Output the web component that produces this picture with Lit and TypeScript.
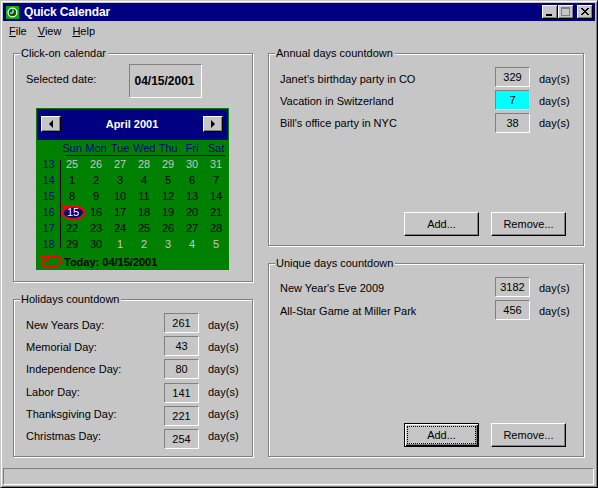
import { LitElement, html, css, svg } from "lit";
import { customElement } from "lit/decorators.js";

const holidays = [
  ["New Years Day:", "261", 0, 2], ["Memorial Day:", "43", 3, 1], ["Independence Day:", "80", 3, 0],
  ["Labor Day:", "141", 4, -1], ["Thanksgiving Day:", "221", 3, -2], ["Christmas Day:", "254", 3, -3],
] as const;
const annual = [
  ["Janet's birthday party in CO", "329", 0, 2, false], ["Vacation in Switzerland", "7", 3, 1, true], ["Bill's office party in NYC", "38", 3, 0, false],
] as const;
const unique = [
  ["New Year's Eve 2009", "3182", 0, 1], ["All-Star Game at Miller Park", "456", 3, 1],
] as const;
const names = ["Sun", "Mon", "Tue", "Wed", "Thu", "Fri", "Sat"];
const weeks: [number, (string)[]][] = [
  [13, ["25", "26", "27", "28", "29", "30", "31"]],
  [14, ["1", "2", "3", "4", "5", "6", "7"]],
  [15, ["8", "9", "10", "11", "12", "13", "14"]],
  [16, ["15", "16", "17", "18", "19", "20", "21"]],
  [17, ["22", "23", "24", "25", "26", "27", "28"]],
  [18, ["29", "30", "1", "2", "3", "4", "5"]],
];

@customElement("app-root")
export class AppRoot extends LitElement {
  static styles = css`
    :host { display: block; width: 598px; height: 488px; font: 11px/13px "Liberation Sans", Arial, sans-serif; color: #000; }
    * { box-sizing: border-box; }
    .window { width: 598px; height: 488px; background: #c6c6c6; display: flex; flex-direction: column;
      border-top: 1px solid #c6c6c6; border-left: 1px solid #c6c6c6; border-right: 1px solid #000; border-bottom: 1px solid #000;
      box-shadow: inset 1px 1px 0 #fff, inset -1px -1px 0 #808080; padding: 2px; }
    .title { height: 18px; flex: none; background: #000080; color: #fff; font-weight: bold; font-size: 12px; display: flex; align-items: center; padding: 0 2px 0 2px; }
    .title .ico { width: 15px; height: 15px; margin-right: 4px; display: block; }
    .title .name { flex: 1; letter-spacing: -0.15px; }
    .wbtn { width: 16px; height: 14px; background: #c6c6c6; display: block; }
    .wbtn.close { margin-left: 3px; }
    .menu { height: 20px; flex: none; display: flex; align-items: center; padding-left: 6px; }
    .menu span { margin-right: 11px; }
    .menu u { text-decoration: underline; }
    .main { flex: 1; min-height: 0; display: grid; grid-template-columns: 240px 316px; column-gap: 15px; padding: 12px 0 0 10px; }
    .col { display: flex; flex-direction: column; height: 405px; }
    .group { position: relative; border: 1px solid #808080; box-shadow: 1px 1px 0 #fff, inset 1px 1px 0 #fff; display: flex; flex-direction: column; }
    .legend { position: absolute; left: 6px; top: -7px; background: #c6c6c6; padding: 0 2px 0 1px; }
    .cal-group { height: 229px; margin-bottom: 17px; padding: 10px 0 0 12px; }
    .hol-group { height: 158px; padding: 13px 0 0 12px; }
    .ann-group { height: 193px; margin-bottom: 17px; padding: 13px 0 0 11px; }
    .uni-group { height: 194px; padding: 13px 0 0 11px; }
    .sel { display: flex; align-items: flex-start; }
    .sel .lab { width: 103px; margin-top: 9px; }
    .sel .val { width: 73px; height: 34px; border: 1px solid; border-color: #808080 #fff #fff #808080; font-weight: bold; font-size: 12px; display: flex; align-items: center; justify-content: center; padding-right: 2px; }
    .cal { position: relative; width: 193px; height: 162px; margin: 10px 0 0 10px; background: #008000; padding: 1px; flex: none; }
    .cal-head { height: 31px; background: #000080; display: flex; align-items: center; justify-content: space-between; padding: 0 5px 1px 4px; color: #fff; font-weight: bold; }
    .nav { width: 20px; height: 16px; background: #c6c6c6; border: 1px solid; border-color: #fff #000 #000 #fff; box-shadow: inset -1px -1px 0 #808080; display: flex; align-items: center; justify-content: center; }
    .nav svg { display: block; }
    .names { height: 15px; display: grid; grid-template-columns: 24px repeat(7, 24px); color: #000080; align-items: center; text-align: center; padding-top: 1px; }
    .names span { padding-right: 2px; }
    .rule { height: 1px; background: #000; margin: 0 3px 0 28px; }
    .body { display: grid; grid-template-columns: 23px 1px repeat(7, 24px); grid-auto-rows: 16px; align-items: center; text-align: center; }
    .body .wk { color: #000080; }
    .body .vl { grid-column: 2; grid-row: 1 / span 6; width: 1px; height: 88px; background: #000; align-self: center; }
    .body .d { padding-right: 2px; }
    .body .d.off { color: #c6c6c6; }
    .body .d.sel15 { color: #fff; background: #000080; border-radius: 50%; width: 20px; height: 12px; line-height: 12px; margin-left: 2px; padding: 0; }
    .today { font-weight: bold; padding: 3px 0 0 27px; height: 18px; display: flex; align-items: center; }
    .ovals { position: absolute; left: 0; top: 0; width: 193px; height: 162px; pointer-events: none; }
    .row { display: flex; align-items: flex-start; height: 20px; flex: none; }
    .row .label { line-height: 20px; white-space: nowrap; }
    .hol-group .label { width: 138px; }
    .ann-group .label, .uni-group .label { width: 215px; }
    .num { width: 35px; height: 20px; flex: none; border: 1px solid; border-color: #808080 #fff #fff #808080; display: flex; align-items: center; justify-content: center; }
    .num.cyan { background: #00ffff; }
    .unit { margin-left: 9px; line-height: 20px; }
    .btns { margin-top: auto; display: flex; justify-content: flex-end; gap: 12px; padding: 0 17px 9px 0; }
    .btn { width: 75px; height: 24px; background: #c6c6c6; border: 1px solid; border-color: #fff #000 #000 #fff; box-shadow: inset -1px -1px 0 #808080; display: flex; align-items: center; justify-content: center; padding: 0; color: #000; font: inherit; }
    .btn.def { border: 1px solid #000; box-shadow: inset 1px 1px 0 #fff, inset -1px -1px 0 #000, inset -2px -2px 0 #808080; }
    .btn.def span { width: 67px; height: 16px; outline: 1px dotted #000; display: flex; align-items: center; justify-content: center; }
    .status { height: 17px; flex: none; margin: 10px 1px 0 0; border: 1px solid; border-color: #808080 #fff #fff #808080; }
  `;

  winBtn(kind: string) {
    const glyph = kind === "min"
      ? svg`<rect x="4" y="9" width="6" height="2" fill="#000"/>`
      : kind === "max"
        ? svg`<rect x="3.5" y="2.5" width="8" height="8" fill="none" stroke="#808080"/><rect x="3" y="2" width="9" height="2" fill="#808080"/>`
        : svg`<path d="M4 3 L11 10 M5 3 L12 10 M11 3 L4 10 M12 3 L5 10" stroke="#000" stroke-width="1" fill="none"/>`;
    return html`<svg class="wbtn ${kind === "close" ? "close" : ""}" viewBox="0 0 16 14" width="16" height="14">
      <rect width="16" height="14" fill="#000"/><rect width="15" height="13" fill="#fff"/><rect x="1" y="1" width="14" height="12" fill="#808080"/><rect x="1" y="1" width="13" height="11" fill="#c6c6c6"/>${glyph}</svg>`;
  }

  rows(list: readonly (readonly any[])[]) {
    return list.map(r => html`<div class="row" style="margin-top:${r[2]}px">
      <span class="label" style="margin-top:${r[3]}px">${r[0]}</span>
      <span class="num ${r[4] ? "cyan" : ""}">${r[1]}</span>
      <span class="unit" style="margin-top:${r[3]}px">day(s)</span>
    </div>`);
  }

  buttons(def: boolean) {
    return html`<div class="btns">
      <button class="btn ${def ? "def" : ""}"><span>Add...</span></button>
      <button class="btn">Remove...</button>
    </div>`;
  }

  render() {
    return html`<div class="window">
      <div class="title">
        <svg class="ico" viewBox="0 0 15 15"><rect width="15" height="15" fill="#000"/><rect x="1" y="1" width="13" height="13" fill="#00b000"/><circle cx="7.500" cy="7.500" r="5" fill="#fff"/><circle cx="7.500" cy="7.500" r="3.800" fill="#006000"/><path d="M8 4.500v3.500H5" stroke="#fff" fill="none"/></svg>
        <span class="name">Quick Calendar</span>
        ${this.winBtn("min")}${this.winBtn("max")}${this.winBtn("close")}
      </div>
      <div class="menu">
        <span><u>F</u>ile</span><span><u>V</u>iew</span><span><u>H</u>elp</span>
      </div>
      <div class="main">
        <div class="col">
          <div class="group cal-group">
            <span class="legend">Click-on calendar</span>
            <div class="sel"><span class="lab">Selected date:</span><span class="val">04/15/2001</span></div>
            <div class="cal">
              <div class="cal-head">
                <span class="nav"><svg width="6" height="8" viewBox="0 0 6 8"><path d="M5 0v8L1 4z" fill="#000"/></svg></span>
                <span>April 2001</span>
                <span class="nav"><svg width="6" height="8" viewBox="0 0 6 8"><path d="M1 0v8l4-4z" fill="#000"/></svg></span>
              </div>
              <div class="names"><i></i>${names.map(n => html`<span>${n}</span>`)}</div>
              <div class="rule"></div>
              <div class="body">
                <div class="vl"></div>
                ${weeks.map(([w, days], i) => html`<span class="wk" style="grid-row:${i + 1};grid-column:1">${w}</span>
                  ${days.map((d, j) => {
                    const off = (i === 0) || (i === 5 && j >= 2);
                    const s = i === 3 && j === 0;
                    return html`<span class="d ${off ? "off" : ""} ${s ? "sel15" : ""}" style="grid-row:${i + 1};grid-column:${j + 3}">${d}</span>`;
                  })}`)}
              </div>
              <div class="today">Today: 04/15/2001</div>
              <svg class="ovals" viewBox="0 0 193 162">
                <g fill="none" stroke="#ff0000" stroke-width="2">
                  <path d="M25 98 H36"/>
                  <ellipse cx="37.500" cy="105" rx="11" ry="6.500"/>
                  <path d="M4 148 H20 C27 150 27 158 16 159 C6 160 3 155 9 152 L14 151"/>
                </g>
              </svg>
            </div>
          </div>
          <div class="group hol-group">
            <span class="legend">Holidays countdown</span>
            ${this.rows(holidays)}
          </div>
        </div>
        <div class="col">
          <div class="group ann-group">
            <span class="legend">Annual days countdown</span>
            ${this.rows(annual)}
            ${this.buttons(false)}
          </div>
          <div class="group uni-group">
            <span class="legend">Unique days countdown</span>
            ${this.rows(unique)}
            ${this.buttons(true)}
          </div>
        </div>
      </div>
      <div class="status"></div>
    </div>`;
  }
}
